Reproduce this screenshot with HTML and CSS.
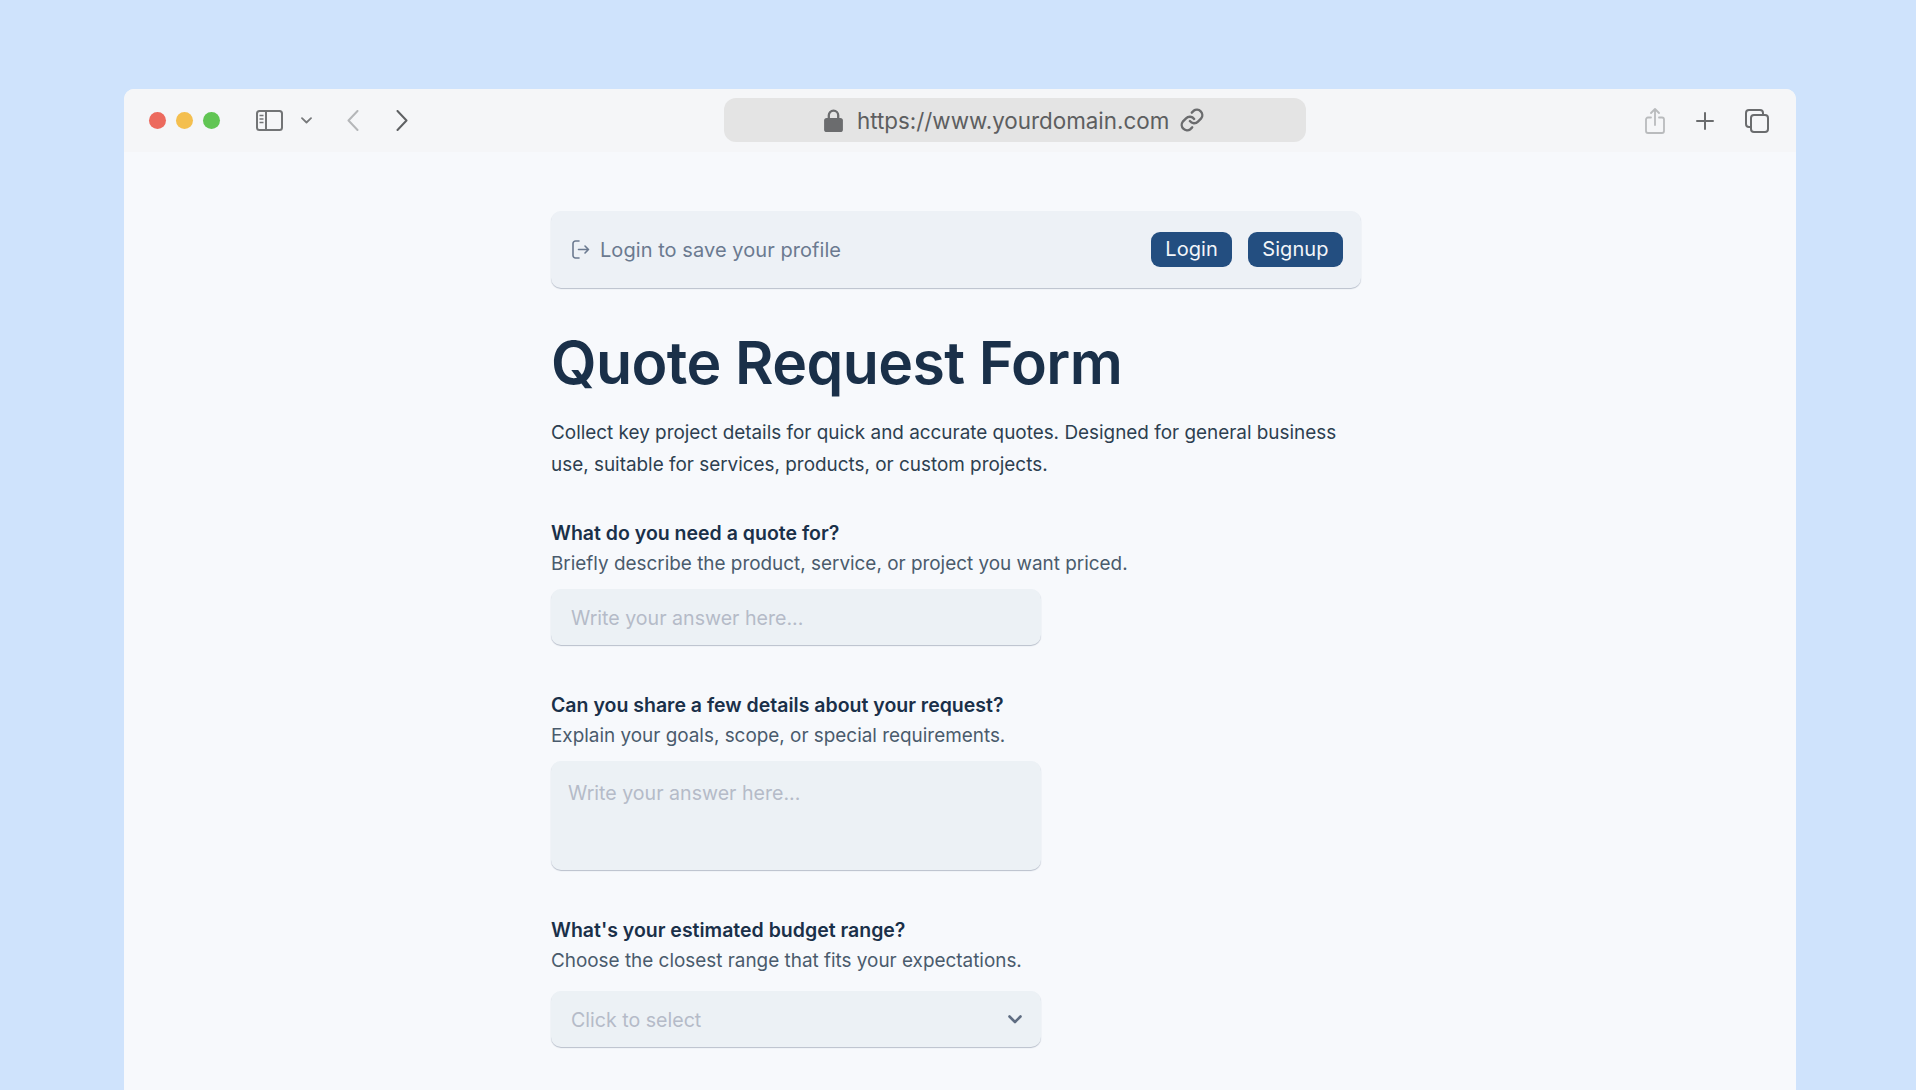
FILE: index.html
```html
<!DOCTYPE html>
<html lang="en">
  <head>
    <meta charset="UTF-8">
    <title>Quote Request Form</title>
    <link rel="stylesheet" href="styles.css">
  </head>
  <body>
    <div class="window">
      <header class="toolbar">
        <div class="dots">
          <span class="dot red"></span>
          <span class="dot yellow"></span>
          <span class="dot green"></span>
        </div>
        <svg class="tool-sidebar" width="27" height="21" viewBox="0 0 27 21" fill="none" stroke="#727476" stroke-width="2">
          <rect x="1" y="1" width="25" height="19" rx="2.5"/>
          <path d="M10 1v19"/>
          <path d="M3.5 5.5h4M3.5 9h4M3.5 12.500h4" stroke-width="1.600"/>
        </svg>
        <svg class="tool-caret" width="11" height="7" viewBox="0 0 11 7" fill="none" stroke="#77797b" stroke-width="1.800" stroke-linecap="round" stroke-linejoin="round">
          <path d="M1 1.200l4.500 4.300L10 1.200"/>
        </svg>
        <svg class="tool-back" width="12" height="21" viewBox="0 0 12 21" fill="none" stroke="#b5b7b9" stroke-width="2" stroke-linecap="round" stroke-linejoin="round">
          <path d="M10.500 1L1.500 10.500l9 9.500"/>
        </svg>
        <svg class="tool-forward" width="12" height="21" viewBox="0 0 12 21" fill="none" stroke="#5f6163" stroke-width="2" stroke-linecap="round" stroke-linejoin="round">
          <path d="M1.500 1l9 9.500-9 9.500"/>
        </svg>

        <div class="urlbar">
          <svg width="19" height="23" viewBox="0 0 18 22">
            <path d="M4.500 9V6a4.500 4.500 0 0 1 9 0v3" fill="none" stroke="#6b6c6e" stroke-width="2.200"/>
            <rect x="0" y="8.500" width="18" height="13.500" rx="2.500" fill="#6b6c6e"/>
          </svg>
          <span class="url">https://www.yourdomain.com</span>
          <svg width="26" height="26" viewBox="0 0 24 24" fill="none" stroke="#6b6c6e" stroke-width="2.200" stroke-linecap="round" stroke-linejoin="round">
            <path d="M10 13a5 5 0 0 0 7.500.5l3-3a5 5 0 0 0-7-7l-1.700 1.700"/>
            <path d="M14 11a5 5 0 0 0-7.500-.5l-3 3a5 5 0 0 0 7 7l1.700-1.700"/>
          </svg>
        </div>

        <div class="tools-right">
          <svg width="20" height="26" viewBox="0 0 20 26" fill="none" stroke="#b9bbbd" stroke-width="1.800" stroke-linecap="round" stroke-linejoin="round">
            <path d="M6 9.500H3a2 2 0 0 0-2 2V23a2 2 0 0 0 2 2h14a2 2 0 0 0 2-2V11.500a2 2 0 0 0-2-2h-3"/>
            <path d="M10 17V1.500M6 5l4-4 4 4"/>
          </svg>
          <svg width="18" height="18" viewBox="0 0 18 18" fill="none" stroke="#6a6c6e" stroke-width="2" stroke-linecap="round">
            <path d="M9 1v16M1 9h16"/>
          </svg>
          <svg width="24" height="24" viewBox="0 0 24 24" fill="none" stroke="#6a6c6e" stroke-width="2">
            <path d="M5.500 18H4a3 3 0 0 1-3-3V4a3 3 0 0 1 3-3h11a3 3 0 0 1 3 3v1.500"/>
            <rect x="6" y="6" width="17" height="17" rx="3"/>
          </svg>
        </div>
      </header>

      <main class="content">
        <div class="login-bar">
          <svg class="login-icon" width="18" height="19" viewBox="0 0 18 19" fill="none" stroke="#6b7a90" stroke-width="1.600" stroke-linecap="round" stroke-linejoin="round">
            <path d="M7 1H3.500A2.500 2.500 0 0 0 1 3.500v12A2.500 2.500 0 0 0 3.500 18H7"/>
            <path d="M6.500 9.500H16.500M13 6l3.500 3.500L13 13"/>
          </svg>
          <span class="login-text">Login to save your profile</span>
          <a class="btn" href="#">Login</a>
          <a class="btn" href="#">Signup</a>
        </div>

        <h1>Quote Request Form</h1>
        <p class="intro">Collect key project details for quick and accurate quotes. Designed for general business use, suitable for services, products, or custom projects.</p>

        <div class="field">
          <label>What do you need a quote for?</label>
          <p class="help">Briefly describe the product, service, or project you want priced.</p>
          <input class="control" type="text" placeholder="Write your answer here...">
        </div>

        <div class="field">
          <label>Can you share a few details about your request?</label>
          <p class="help">Explain your goals, scope, or special requirements.</p>
          <textarea class="control area" placeholder="Write your answer here..."></textarea>
        </div>

        <div class="field">
          <label>What's your estimated budget range?</label>
          <p class="help">Choose the closest range that fits your expectations.</p>
          <div class="control select">
            <span>Click to select</span>
            <svg width="14" height="9" viewBox="0 0 14 9" fill="none" stroke="#5f6d82" stroke-width="2.600" stroke-linecap="round" stroke-linejoin="round">
              <path d="M1.500 1.500L7 7l5.500-5.500"/>
            </svg>
          </div>
        </div>
      </main>
    </div>
  </body>
</html>
```

FILE: styles.css
```css
html {
  box-sizing: border-box;
}

*,
*::before,
*::after {
  box-sizing: inherit;
}

body {
  font-family: Inter, "Liberation Sans", sans-serif;
  background-color: #cfe3fc;
  margin: 0;
  height: 1090px;
  overflow: hidden;
  padding: 89px 120px 0 124px;
}

.window {
  height: 1001px;
  background-color: #f7f9fc;
  border-radius: 10px 10px 0 0;
  overflow: hidden;
}

/* Browser toolbar */

.toolbar {
  display: flex;
  align-items: center;
  height: 63px;
  padding: 0 27px 0 24.5px;
  background-color: #f5f6f8;
}

.dots {
  display: flex;
  gap: 10.3px;
}

.dot {
  width: 17px;
  height: 17px;
  border-radius: 50%;
}

.red {
  background-color: #ec6a5e;
}

.yellow {
  background-color: #f4bf4f;
}

.green {
  background-color: #61c554;
}

.tool-sidebar {
  margin-left: 35.5px;
}

.tool-caret {
  margin-left: 18px;
}

.tool-back {
  margin-left: 35px;
}

.tool-forward {
  margin-left: 37px;
}

.urlbar {
  display: flex;
  align-items: center;
  justify-content: center;
  width: 582px;
  height: 44px;
  margin-left: 316px;
  margin-top: -1px;
  border-radius: 12px;
  background-color: #e4e4e4;
  color: #5d5e60;
  font-size: 22.4px;
}

.url {
  margin: 0 10px 0 14px;
}

.tools-right {
  display: flex;
  align-items: center;
  gap: 31px;
  margin-left: auto;
}

/* Page content */

.content {
  width: 810px;
  margin-left: 427px;
  padding-top: 59px;
}

.login-bar {
  display: flex;
  align-items: center;
  height: 77px;
  padding: 0 18px 0 21px;
  border-radius: 10px;
  background-color: #edf1f6;
  box-shadow: 0 1px 1px #b8bfcb;
}

.login-text {
  margin-left: 10px;
  margin-right: auto;
  color: #6b7a90;
  font-size: 20px;
  letter-spacing: 0.06px;
}

.btn {
  display: block;
  height: 35px;
  line-height: 35px;
  margin-left: 15.5px;
  padding: 0 14.5px;
  border-radius: 9px;
  background-color: #234e80;
  color: #f2f5f9;
  font-size: 20px;
  letter-spacing: 0.06px;
  text-decoration: none;
}

h1 {
  margin: 39px 0 0;
  color: #1a3049;
  font-size: 59px;
  font-weight: 600;
  line-height: 72px;
  letter-spacing: -0.6px;
}

.intro {
  margin: 18px 0 0;
  color: #2d3f50;
  font-size: 18.9px;
  line-height: 32px;
}

.field {
  margin-top: 44px;
}

.intro + .field {
  margin-top: 36px;
}

label {
  display: block;
  color: #1a3049;
  font-size: 19.5px;
  font-weight: 600;
  line-height: 33px;
}

.help {
  margin: 0 0 11px;
  color: #4a5b6c;
  font-size: 18.9px;
  line-height: 28px;
}

.control {
  display: block;
  width: 490px;
  height: 56px;
  padding: 1px 20px 0;
  border: 0;
  border-radius: 10px;
  background-color: #ecf1f5;
  box-shadow: 0 1px 1px #b8bfcb;
  color: #b5bbc8;
  font-family: inherit;
  font-size: 19.6px;
}

.control::placeholder {
  color: #b5bbc8;
  opacity: 1;
}

.area {
  height: 109px;
  padding: 20px 17px;
  resize: none;
}

.select {
  display: flex;
  align-items: center;
  justify-content: space-between;
  margin-top: 16px;
  padding-right: 19px;
}
```
